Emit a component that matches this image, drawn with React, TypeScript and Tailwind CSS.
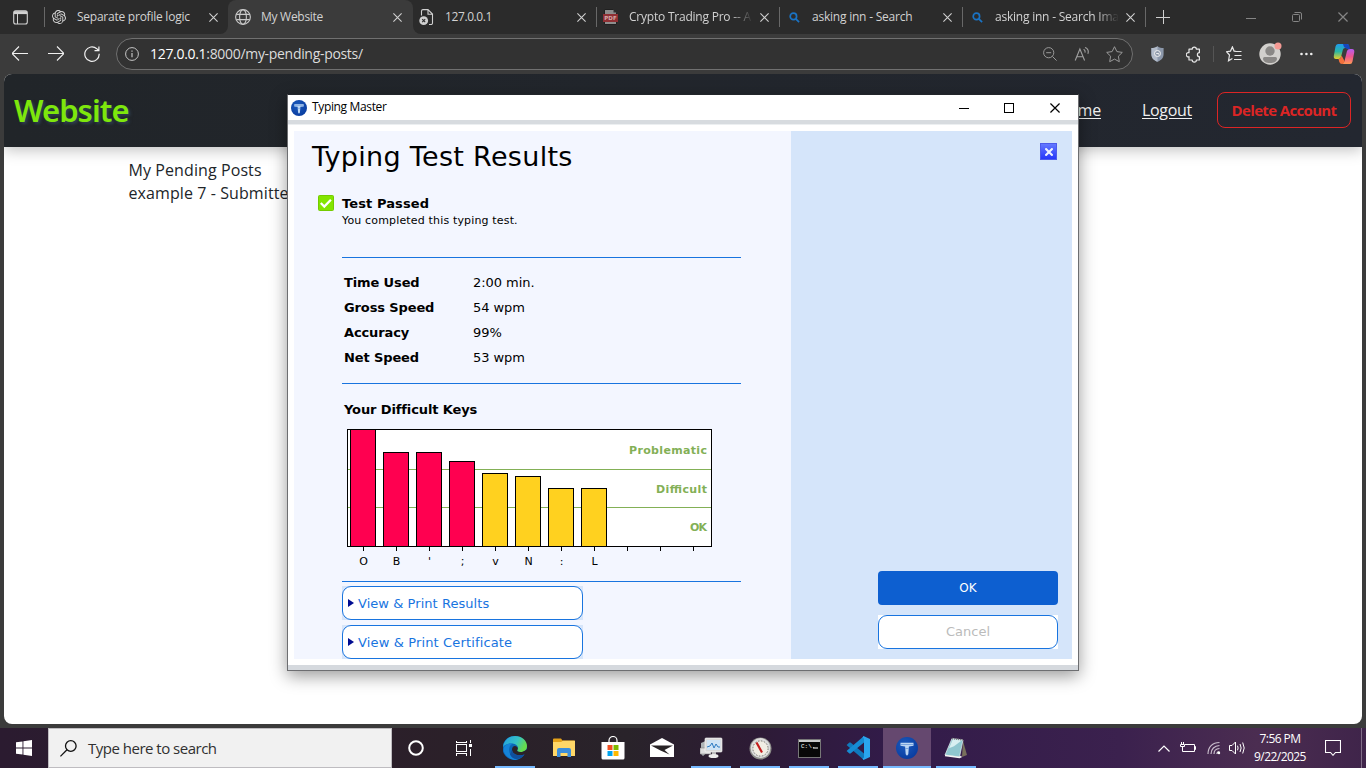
import React from "react";

const X = ({ s = 9, c = "#d0d0d0", w = 1.1 }: { s?: number; c?: string; w?: number }) => (
  <svg width={s} height={s} viewBox="0 0 9 9" fill="none" stroke={c} strokeWidth={w} className="shrink-0">
    <path d="M.4.4 8.6 8.6M8.6.4.4 8.6" />
  </svg>
);

const Globe = () => (
  <svg width="16" height="16" viewBox="0 0 16 16" fill="none" stroke="#c9c9c9" strokeWidth="1.1">
    <circle cx="8" cy="8" r="7.4" />
    <ellipse cx="8" cy="8" rx="3.4" ry="7.3" />
    <path d="M1.3 5.4h13.4M1.3 10.6h13.4" />
  </svg>
);

const Gpt = () => (
  <svg width="14" height="14" viewBox="0 0 24 24" fill="#d6d6d6">
    <path d="M22.28 9.82a5.98 5.98 0 0 0-.52-4.91 6.05 6.05 0 0 0-6.51-2.9A6.07 6.07 0 0 0 4.98 4.18a5.98 5.98 0 0 0-4 2.9 6.05 6.05 0 0 0 .74 7.1 5.98 5.98 0 0 0 .51 4.91 6.05 6.05 0 0 0 6.52 2.9A5.98 5.98 0 0 0 13.26 24a6.06 6.06 0 0 0 5.77-4.21 5.99 5.99 0 0 0 4-2.9 6.06 6.06 0 0 0-.75-7.07zM13.26 22.43a4.48 4.48 0 0 1-2.88-1.04l.14-.08 4.78-2.76a.8.8 0 0 0 .39-.68v-6.74l2.02 1.17v5.58a4.5 4.5 0 0 1-4.45 4.55zM3.6 18.3a4.47 4.47 0 0 1-.54-3.01l.14.08 4.78 2.76a.77.77 0 0 0 .78 0l5.84-3.37v2.33L9.74 19.95A4.5 4.5 0 0 1 3.6 18.3zM2.34 7.9a4.49 4.49 0 0 1 2.37-1.98V11.6a.77.77 0 0 0 .39.68l5.81 3.35-2.02 1.17-4.83-2.79A4.5 4.5 0 0 1 2.34 7.9zm16.6 3.85-5.84-3.38 2.02-1.17 4.83 2.79a4.5 4.5 0 0 1-.68 8.1v-5.67a.79.79 0 0 0-.4-.67zm2.01-3.02-.14-.09-4.77-2.78a.78.78 0 0 0-.79 0L9.41 9.23V6.9l4.85-2.8a4.5 4.5 0 0 1 6.68 4.66zM8.31 12.86l-2.02-1.16V6.07a4.5 4.5 0 0 1 7.38-3.45l-.15.08-4.78 2.76a.8.8 0 0 0-.39.68zm1.09-2.36L12 9l2.61 1.5v3L12 15l-2.6-1.5z" />
  </svg>
);

const ErrPage = () => (
  <svg width="15" height="17" viewBox="0 0 15 17" fill="none" stroke="#d0d0d0">
    <path d="M2.5 6.5V2A1.5 1.5 0 0 1 4 .6h5L13.5 5v9A1.5 1.5 0 0 1 12 15.5h-2M9 .8V5.2h4.4" strokeWidth="1.1" />
    <circle cx="4.7" cy="11.7" r="4.4" fill="#d0d0d0" stroke="none" />
    <path d="M3.2 10.2l3 3M6.2 10.2l-3 3" stroke="#2b2b2b" strokeWidth="1.1" />
  </svg>
);

const Pdf = () => (
  <svg width="15" height="16" viewBox="0 0 15 16">
    <path d="M1.5.5h9l3 3v12h-12z" fill="#8d8d8d" stroke="#202020" />
    <path d="M10.5.5v3h3" fill="#333" />
    <rect x="0" y="5" width="15" height="8" fill="#8f2f33" />
    <text x="7.5" y="11.3" fontSize="5.5" fontWeight="700" fill="#d3a9a9" textAnchor="middle" fontFamily="DejaVu Sans">PDF</text>
  </svg>
);

const BlueSearch = () => (
  <svg width="11" height="11" viewBox="0 0 11 11" fill="none" stroke="#1a73c4" strokeWidth="1.7">
    <circle cx="4.4" cy="4.4" r="3.2" />
    <path d="M6.8 6.8l3.3 3.4" />
  </svg>
);

const TLogo = ({ s }: { s: number }) => (
  <svg width={s} height={s} viewBox="0 0 22 22" className="shrink-0">
    <defs>
      <radialGradient id="tm" cx=".4" cy=".35" r=".8">
        <stop offset="0" stopColor="#1b5bbd" />
        <stop offset="1" stopColor="#06379b" />
      </radialGradient>
    </defs>
    <circle cx="11" cy="11" r="11" fill="url(#tm)" />
    <path d="M4.5 5.8h13v3l-4.6.6-.6 7.900-1.300 1.500-1.300-1.500-.6-7.900-4.600-.6z" fill="#bcd6f3" />
    <path d="M4.500 7.500h13M9.400 11.500h3.200" stroke="#5f8fd3" strokeWidth=".7" />
  </svg>
);

const tabText = "text-[12px] leading-4 whitespace-nowrap overflow-hidden text-[#d2d2d2]";
const fade = " [mask-image:linear-gradient(to_right,black_82%,transparent_100%)]";

function Tabs() {
  return (
    <div className="flex h-[34px] shrink-0 items-center bg-[#2b2b2b]">
      <div className="flex w-11 shrink-0 justify-center pr-1">
        <svg width="15" height="15" viewBox="0 0 15 15" fill="none" stroke="#d2d2d2">
          <rect x=".7" y=".7" width="13.6" height="13.3" rx="2" strokeWidth="1.1" />
          <path d="M1 2.6h13" strokeWidth="3" />
          <path d="M4.5 3v11" />
        </svg>
      </div>
      <div className="h-[34px] w-[184px] shrink-0 bg-[#3b3b3b]">
        <div className="flex h-[34px] items-center rounded-br-lg bg-[#2b2b2b]">
          <div className="h-5 w-px bg-[#686868]" />
          <div className="ml-[7px] flex w-[25px]"><Gpt /></div>
          <div className={tabText + " w-[128px] tracking-[-0.24px]"}>Separate profile logic</div>
          <div className="ml-1"><X /></div>
        </div>
      </div>
      <div className="h-[34px] w-[185px] shrink-0 bg-[#2b2b2b]">
        <div className="flex h-[34px] items-center rounded-t-lg bg-[#3b3b3b] pl-[7px]">
          <div className="w-[26px]"><Globe /></div>
          <div className={tabText + " w-[132px] tracking-[-0.28px]"}>My Website</div>
          <X />
        </div>
      </div>
      <div className="h-[34px] w-[183px] shrink-0 bg-[#3b3b3b]">
        <div className="flex h-[34px] items-center rounded-bl-lg bg-[#2b2b2b] pl-1.5">
          <div className="w-[26px]"><ErrPage /></div>
          <div className={tabText + " w-[132px] tracking-[-0.4px]"}>127.0.0.1</div>
          <X />
        </div>
      </div>
      <div className="flex w-[183px] shrink-0 items-center">
        <div className="h-5 w-px bg-[#686868]" />
        <div className="w-[32px] pl-[6px]"><Pdf /></div>
        <div className={tabText + " w-[124px] tracking-[-0.22px]" + fade}>Crypto Trading Pro -- A</div>
        <div className="ml-[7px]"><X /></div>
      </div>
      {["asking inn - Search", "asking inn - Search Ima"].map((t, i) => (
        <div key={t} className="flex w-[183px] shrink-0 items-center">
          <div className="h-5 w-px bg-[#686868]" />
          <div className="w-[32px] pl-[9px]"><BlueSearch /></div>
          <div className={tabText + " w-[124px] tracking-[-0.22px]" + (i ? fade : "")}>{t}</div>
          <div className="ml-[7px]"><X /></div>
        </div>
      ))}
      <div className="h-5 w-px bg-[#686868]" />
      <svg className="ml-2.5" width="14" height="14" viewBox="0 0 14 14" stroke="#d0d0d0"><path d="M7.5 0v14M0 7.5h14" /></svg>
      <div className="ml-auto flex items-center gap-9 pr-[18px]">
        <svg width="10" height="10" stroke="#858585"><path d="M0 6.5h10" /></svg>
        <svg width="10" height="10" viewBox="0 0 10 10" fill="none" stroke="#858585">
          <rect x=".5" y="2.5" width="7" height="7" rx="1" />
          <path d="M2.5.5H8A1.5 1.5 0 0 1 9.5 2v5.5" />
        </svg>
        <X c="#858585" s={10} />
      </div>
    </div>
  );
}

function AddressBar() {
  return (
    <div className="flex h-10 shrink-0 items-center bg-[#3b3b3b] pl-3">
      <svg width="16" height="16" viewBox="0 0 16 16" fill="none" stroke="#f0f0f0" strokeWidth="1.1"><path d="M0 7.500h16M7 .5 0 7.500l7 7" /></svg>
      <svg className="ml-5" width="16" height="16" viewBox="0 0 16 16" fill="none" stroke="#f0f0f0" strokeWidth="1.1"><path d="M0 7.500h16M9 .5l7 7-7 7" /></svg>
      <svg className="ml-5" width="16" height="16" viewBox="0 0 16 16" fill="none" stroke="#f0f0f0" strokeWidth="1.2"><path d="M15.2 7.8A7.2 7.2 0 1 1 12.8 2.7l1.7 1.7M14.9.5v4.2h-4.4" /></svg>
      <div className="ml-4 flex h-8 w-[1017px] items-center rounded-full border border-[#707070] bg-[#323232] pr-[9px] pl-2">
        <svg width="14" height="14" viewBox="0 0 14 14" fill="none" stroke="#c5c5c5"><circle cx="7" cy="7" r="6.4" /><path d="M7 6v4.2M7 3.6v1.2" strokeWidth="1.2" /></svg>
        <div className="ml-[11px] pb-px text-[14px] leading-5 tracking-[-0.31px] text-[#dcdcdc]"><span className="text-white">127.0.0.1</span>:8000/my-pending-posts/</div>
        <div className="ml-auto flex items-center gap-[17px]">
          <svg width="14" height="14" viewBox="0 0 14 14" fill="none" stroke="#999"><circle cx="5.7" cy="5.7" r="5.1" /><path d="M9.4 9.4l4.2 4.2M3.2 5.7h5" /></svg>
          <svg width="15" height="15" viewBox="0 0 15 15" fill="none" stroke="#a0a0a0" strokeWidth="1.1"><path d="M1.200 13.500 5.900 2l4.700 11.500M2.700 9.700h6.400M9.500 2.500c1.500.4 1.800 2 1.400 3.200M11 .5c3 .8 3.900 3.800 2.800 6.300" /></svg>
          <svg width="17" height="17" viewBox="0 0 17 17" fill="none" stroke="#999" strokeLinejoin="round"><path d="m8.5.7 2.400 4.900 5.400.8-3.900 3.800.9 5.500-4.800-2.600-4.800 2.600.9-5.500L.7 6.400l5.400-.8z" /></svg>
        </div>
      </div>
      <svg className="ml-[18px]" width="13" height="16" viewBox="0 0 13 16"><path d="M6.5.2C8.5 1.7 10.5 2 12.6 2v6c0 4-2.6 6.5-6.1 7.8C3 14.5.4 12 .4 8V2c2.1 0 4.1-.3 6.1-1.8z" fill="#8c98ab" /><path d="M6.5.2v15.6C3 14.5.4 12 .4 8V2c2.1 0 4.1-.3 6.1-1.8z" fill="#b3bcca" /><circle cx="6.5" cy="7.5" r="3" fill="#929dad" stroke="#f0f0f0" /><path d="M5.2 7.5h2.6v1.2" fill="none" stroke="#eee" /></svg>
      <svg className="ml-[22px]" width="16" height="17" viewBox="0 0 16 17" fill="none" stroke="#e7e7e7" strokeWidth="1.2" strokeLinejoin="round"><path d="M3 3.200h3.200a2.100 2.100 0 1 1 4.200 0h3v3.500a2 2 0 0 0 0 4V14h-3a2.100 2.100 0 0 1-4.200 0H3v-3.300a2.100 2.100 0 1 1 0-4z" /></svg>
      <div className="ml-[11px] h-4 w-px bg-[#555]" />
      <svg className="ml-3" width="16" height="16" viewBox="0 0 16 16" fill="none" stroke="#e7e7e7" strokeWidth="1.2"><path d="M10 5.4 8.1 5.1 6.4.9 4.5 5.1.5 5.7 3.5 9 2.5 14.8l3.9-2.2M9 5.5h6.5M8.5 9.5H15.5M8 13.5h7.5" /></svg>
      <svg className="ml-[17px]" width="24" height="24" viewBox="0 0 24 24"><circle cx="11" cy="12" r="10.700" fill="#d2d0cd" /><circle cx="11" cy="9" r="4.700" fill="#8a8886" /><path d="M4 16.500q0-1.500 1.500-1.500h11q1.500 0 1.500 1.500c0 3-3 4.600-7 4.600s-7-1.600-7-4.600z" fill="#8a8886" /><circle cx="19" cy="3.900" r="3.500" fill="#f49a94" /></svg>
      <svg className="ml-[17px]" width="13" height="4" fill="#eee"><circle cx="1.5" cy="2" r="1.3" /><circle cx="6.4" cy="2" r="1.3" /><circle cx="11.3" cy="2" r="1.3" /></svg>
      <svg className="ml-[20px] shrink-0" width="22" height="22" viewBox="0 0 22 22">
        <defs>
          <linearGradient id="cpa" x1="0" y1="0" x2="0" y2="1"><stop offset="0" stopColor="#209bf0" /><stop offset=".5" stopColor="#29b6a4" /><stop offset="1" stopColor="#e7cf2a" /></linearGradient>
          <linearGradient id="cpb" x1="0" y1="0" x2="0" y2="1"><stop offset="0" stopColor="#b55cf0" /><stop offset=".5" stopColor="#ee5590" /><stop offset="1" stopColor="#ff9a54" /></linearGradient>
        </defs>
        <path d="M5 1h9q2 0 1.5 2l-.5 2h-3q-1.700 0-2.200 2L8 14q-.5 2-2.500 2H3q-2.500 0-2.200-3L2.500 3.500Q3 1 5 1z" fill="url(#cpa)" />
        <path d="M10 1h4q2 0 2.300 1.500L17 6h-3l-3-2z" fill="#1746bd" />
        <path d="M17 6h2q2.500 0 2.300 3l-1.800 9.500q-.5 2.500-2.500 2.500H9q2-1 2.500-3L14 8q.6-2 3-2z" fill="url(#cpb)" />
        <path d="M5.500 16q2 0 2.500-2l.6-1.500 2.900 5.500Q11 21 9 21T6.300 19z" fill="#f3703c" />
      </svg>
    </div>
  );
}

const bars = [
  { k: "O", h: 117, red: true },
  { k: "B", h: 94, red: true },
  { k: "'", h: 94, red: true },
  { k: ";", h: 85, red: true },
  { k: "v", h: 73, red: false },
  { k: "N", h: 70, red: false },
  { k: ":", h: 58, red: false },
  { k: "L", h: 58, red: false },
];

function KeyChart() {
  return (
    <svg className="ml-[53px] block" width="366" height="146" viewBox="0 0 366 146" fontFamily="'DejaVu Sans'" fontSize="11" shapeRendering="crispEdges">
      <rect x=".5" y=".5" width="364" height="117" fill="#fff" stroke="#000" />
      <path d="M1 40.5h363M1 78.5h363" stroke="#83b056" />
      {bars.map((b, i) => (
        <g key={b.k}>
          <rect x={3.5 + i * 33} y={117.5 - b.h} width="25" height={b.h} fill={b.red ? "#ff0050" : "#ffd11f"} stroke="#000" />
          <text x={16.5 + i * 33} y="136" textAnchor="middle">{b.k}</text>
        </g>
      ))}
      {Array.from({ length: 11 }, (_, i) => (
        <path key={i} d={`M${16.5 + i * 33} 118v4`} stroke="#000" />
      ))}
      <g fill="#83b056" fontWeight="700" textAnchor="end" fontSize="11">
        <text x="360" y="25" textLength="78">Problematic</text>
        <text x="360" y="64" textLength="51">Difficult</text>
        <text x="360" y="102" textLength="17">OK</text>
      </g>
    </svg>
  );
}

const stats = [
  ["Time Used", "2:00 min."],
  ["Gross Speed", "54 wpm"],
  ["Accuracy", "99%"],
  ["Net Speed", "53 wpm"],
];

const links = [
  { t: "View & Print Results", c: "tracking-[0.05px]" },
  { t: "View & Print Certificate", c: "tracking-[0.14px]" },
];

function Dialog() {
  return (
    <div className="absolute top-[94px] left-[287px] flex h-[577px] w-[792px] flex-col border border-[#6d6e71] border-t-[#22252a] bg-white font-['DejaVu_Sans',sans-serif] text-black shadow-[0_5px_16px_rgba(0,0,0,0.4)]">
      <div className="flex h-[25px] shrink-0 items-center bg-white pl-[3px]">
        <TLogo s={16} />
        <span className="ml-[5px] pb-px font-['Open_Sans',sans-serif] text-[12px] tracking-[-0.35px]">Typing Master</span>
        <div className="ml-auto flex items-center gap-[35px] pr-[18px]">
          <svg className="-mr-px" width="11" height="10" stroke="#000"><path d="M0 5.500h10" /></svg>
          <svg className="mr-px" width="10" height="10" fill="none" stroke="#000"><rect x=".5" y=".5" width="9" height="9" /></svg>
          <X s={10} c="#000" />
        </div>
      </div>
      <div className="h-[5px] shrink-0 border-b border-[#eceff1] bg-[#d7dbdf]" />
      <div className="flex min-h-0 flex-1 px-1.5 pt-1.5 pb-[6px]">
        <div className="flex w-[497px] flex-col bg-[#f3f6ff]">
          <h1 className="mt-[9px] ml-[18px] h-[34px] text-[27px] leading-[34px] whitespace-nowrap tracking-[0.3px]">Typing Test Results</h1>
          <div className="mt-[20px] ml-6 flex">
            <svg width="16" height="16" viewBox="0 0 16 16" className="mt-[1px]"><rect x=".5" y=".5" width="15" height="15" rx="1" fill="#83e500" stroke="#74cb00" /><path d="m2.800 8 3.500 3.500 6.600-6.800" fill="none" stroke="#fff" strokeWidth="2.3" /></svg>
            <div className="ml-2 pt-px">
              <div className="text-[13px] leading-[17px] font-bold tracking-[0.1px]">Test Passed</div>
              <div className="pt-px text-[11px] leading-[16px] tracking-[0.16px]">You completed this typing test.</div>
            </div>
          </div>
          <div className="mt-[28px] ml-12 h-px w-[399px] shrink-0 bg-[#1874df]" />
          <dl className="mt-[12px] ml-[50px]">
            {stats.map(([a, b]) => (
              <div key={a} className="flex h-[25px] items-center text-[13px]">
                <dt className="w-[129px] font-bold tracking-[-0.12px]">{a}</dt>
                <dd className="tracking-[-0.05px]">{b}</dd>
              </div>
            ))}
          </dl>
          <div className="mt-[13px] ml-12 h-px w-[399px] shrink-0 bg-[#1874df]" />
          <div className="mt-[16px] ml-[50px] h-[29px] text-[13px] leading-5 font-bold tracking-[-0.12px]">Your Difficult Keys</div>
          <KeyChart />
          <div className="mt-[6px] ml-12 h-px w-[399px] shrink-0 bg-[#1874df]" />
          <div className="mt-1 ml-12 flex flex-col gap-[5px]">
            {links.map(({ t, c }) => (
              <div key={t} className="w-[241px] bg-[#d6e5fa]">
                <div className="flex h-[34px] items-center rounded-[9px] border border-[#1874df] bg-white pl-[5px] text-[13px] text-[#1874df]">
                  <svg width="6" height="8" className="mr-1"><path d="M0 0l6 4-6 4z" fill="#000c91" /></svg>
                  <span className={"pt-px " + c}>{t}</span>
                </div>
              </div>
            ))}
          </div>
        </div>
        <div className="flex w-[281px] flex-col bg-[#d5e5fa] pr-[14px]">
          <div className="mt-3 mr-px flex h-[17px] w-[17px] items-center justify-center self-end border border-[#4d5bea] bg-[linear-gradient(#6478ff,#2637fa)]"><X s={8} c="#eef2ff" w={2.4} /></div>
          <div className="mt-auto flex h-[34px] w-[180px] items-center justify-center self-end rounded-[4px] bg-[#0d5fd0] text-[12px] text-white">OK</div>
          <div className="mt-2.5 mb-2.5 w-[180px] self-end bg-white">
            <div className="flex h-[34px] items-center justify-center rounded-[9px] border border-[#1874df] bg-white text-[13px] text-[#bbb]">Cancel</div>
          </div>
        </div>
      </div>
      <div className="h-[5px] shrink-0 bg-[#d5d9de]" />
    </div>
  );
}

const Edge = () => (
  <svg width="24" height="24" viewBox="0 0 24 24">
    <defs>
      <linearGradient id="e1" x1="0" y1="0" x2="1" y2=".4"><stop offset="0" stopColor="#239be0" /><stop offset=".6" stopColor="#35c1c7" /><stop offset="1" stopColor="#66dd4c" /></linearGradient>
    </defs>
    <path d="M12 0a12 12 0 0 1 12 12q0 1-1 2-1.500 1.500-4 2l2.500 2.600A12 12 0 1 1 12 0z" fill="#0b67b8" />
    <path d="M0 11C1 4 6 0 12 0c7 0 12 4.600 12 10 0 4-3 6-6.500 6-3 0-4-1.200-3-2.500C16 11 13.500 8 9.500 7.600 5 7 1.500 9 0 11z" fill="url(#e1)" />
    <path d="M9.600 7.700C3 11 6 22 15 23.600 10 25 3 21.500 1 16-1 9 6 6.500 9.600 7.700z" fill="#1583d7" />
    <path d="M14.500 13.500c-1 1.300 0 2.500 3 2.500 2 0 3.800-.6 5-1.800L24 17l-2.500 1.600C16 20.500 9 18.500 9 13.500c0-2 1.200-3.300 3-3.500 2 .3 3.500 2 2.500 3.500z" fill="#2b2328" />
    <path d="M9 13.500c0 5 7 7 12.500 5.100C18 24 10 25 7 18.500z" fill="#104f9c" />
  </svg>
);
const Folder = () => (
  <svg width="22" height="20" viewBox="0 0 22 20"><path d="M0 1.500Q0 .5 1 .5h7l1.500 2H21q1 0 1 1V18H0z" fill="#e5a219" /><path d="M0 4h8l2-1.300h12V18H0z" fill="#ffd767" /><path d="M4 19v-7q0-2 2-2h10q2 0 2 2v7h-3.500v-4h-7v4z" fill="#3b8edb" /></svg>
);
const Store = () => (
  <svg width="24" height="24" viewBox="0 0 24 24"><path d="M8 7V4.500a4 4 0 0 1 8 0V7" fill="none" stroke="#fff" strokeWidth="1.200" /><path d="M.5 6h23v16q0 1.500-1.500 1.500H2Q.5 23.500.5 22z" fill="#fff" /><path fill="#f25022" d="M6.500 9h5v5h-5z" /><path fill="#7fba00" d="M12.500 9h5v5h-5z" /><path fill="#00a4ef" d="M6.500 15h5v5h-5z" /><path fill="#ffb900" d="M12.500 15h5v5h-5z" /></svg>
);
const Mail = () => (
  <svg width="24" height="20" viewBox="0 0 24 20"><path d="M0 6.500 12 0l12 6.500V19H0z" fill="#fff" /><path d="M1 7.500h22l-8.500 4.500 5 4.500-9-4z" fill="#282326" /></svg>
);
const Monitor = () => (
  <svg width="23" height="22" viewBox="0 0 23 22"><path d="M1 6l9-4v11l-7 6-2-2z" fill="#aeb4b7" /><rect x="0" y="11" width="11" height="6" fill="#dedede" stroke="#777" strokeWidth=".5" /><rect x="5" y="1" width="17" height="14" rx="1" fill="#dadada" stroke="#fff" strokeWidth=".6" /><rect x="6.800" y="3" width="13.500" height="10" fill="#cfe4f5" /><path d="M7 10l3-1 2-3 2 5 2-4 2 3h2" fill="none" stroke="#2d7bc2" /><path d="M12 15h4v3h-4z" fill="#bbb" /><ellipse cx="13.500" cy="19" rx="5" ry="2" fill="#ededed" /></svg>
);
const Gauge = () => (
  <svg width="23" height="23" viewBox="0 0 23 23"><circle cx="11.500" cy="11.500" r="11" fill="#8d8d89" /><circle cx="11.500" cy="11" r="9.900" fill="#ddd" /><circle cx="11.500" cy="11.500" r="7.600" fill="#f1eee4" stroke="#77776f" strokeDasharray="1.500 1.500" /><path d="m7.500 5.500 5.500 10" stroke="#c41d1d" strokeWidth="2.200" /></svg>
);
const Term = () => (
  <svg width="23" height="19" viewBox="0 0 23 19"><rect x=".5" y=".5" width="22" height="18" fill="#080808" stroke="#777" /><path d="M1 2h21" stroke="#ccc" strokeWidth="2" /><text x="3" y="9.300" fontSize="6" fontFamily="Liberation Mono" fill="#fff">C:\.</text><path d="M15 9h5" stroke="#fff" /></svg>
);
const Code = () => (
  <svg width="24" height="24" viewBox="0 0 24 24"><path d="m1.500 8.200 1.800-1.600q.6-.4 1.200 0L18 17.500V24L.8 9.300q-.5-.6.7-1.100z" fill="#0f79bd" /><path d="m1.500 15.800 1.800 1.600q.6.4 1.200 0L18 6.500V0L.8 14.700q-.5.6.7 1.100z" fill="#168bd3" /><path d="M17.500 0 24 3v18l-6.500 3-1-1.500 1.500-1V2.500l-1.500-1z" fill="#2aa5ee" /></svg>
);
const Notepad = () => (
  <svg width="24" height="22" viewBox="0 0 24 22"><path d="M19 4l4 14-5 2z" fill="#78705c" /><path d="M8 1.500 19 3l-3.500 17L1 18z" fill="#8fc6cf" stroke="#e9f3f3" strokeWidth=".7" /><path d="M9 2l9 1.200-8 6-5 2z" fill="#d8eff1" /><path d="M1 18.500 15.500 20.500l2-1" fill="none" stroke="#f5f5f5" strokeWidth="1.400" /><path d="M8 1.500 19 3" stroke="#777" strokeWidth="1.500" strokeDasharray="1 1" /></svg>
);

const apps = [
  { el: <Edge />, on: true },
  { el: <Folder />, on: false },
  { el: <Store />, on: false },
  { el: <Mail />, on: false },
  { el: <Monitor />, on: true },
  { el: <Gauge />, on: true },
  { el: <Term />, on: true },
  { el: <Code />, on: true },
  { el: <TLogo s={22} />, on: true, active: true },
  { el: <Notepad />, on: true },
];

function Taskbar() {
  return (
    <div className="flex h-10 shrink-0 bg-[linear-gradient(90deg,#2b1b30_0%,#2b2029_33%,#29232a_46%,#2d1b35_55%,#321b49_65%,#3b214e_82%,#4b2d51_92%,#3f244a_100%)] text-white">
      <div className="flex w-12 items-center justify-center">
        <svg width="16" height="16" viewBox="0 0 16 16" fill="#fff"><path d="M0 2.300 6.500 1.400V7.500H0zM7.400 1.200 16 0v7.500H7.400zM0 8.400h6.500v6.200L0 13.700zM7.400 8.400H16V16l-8.600-1.200z" /></svg>
      </div>
      <div className="flex w-[344px] items-center border border-[#bebcc0] bg-[#f1f1f1] pl-[11px] text-[#303030]">
        <svg width="17" height="17" viewBox="0 0 17 17" fill="none" stroke="#111" strokeWidth="1.300"><circle cx="10.800" cy="6" r="5.300" /><path d="m7 9.800-6.600 6.600" /></svg>
        <span className="ml-[11px] text-[15px] tracking-[-0.5px]">Type here to search</span>
      </div>
      <div className="flex w-12 items-center justify-center">
        <svg width="16" height="16" viewBox="0 0 16 16" fill="none" stroke="#fff" strokeWidth="2"><circle cx="8" cy="8" r="6.800" /></svg>
      </div>
      <div className="flex w-12 items-center justify-center">
        <svg width="16" height="16" viewBox="0 0 16 16" fill="none" stroke="#fff" shapeRendering="crispEdges"><path d="M.5 4.500h10v7H.5zM.5.500v2h10v-2M.5 15.500v-2h10v2M14.500 0v3M14.500 9v7" /><path d="M13 4h3v3h-3z" fill="#fff" stroke="none" /></svg>
      </div>
      <div className="ml-[3px] flex">
        {apps.map((a, i) => (
          <div key={i} className="w-[49px] pr-px">
            <div className={"flex w-12 flex-col items-center " + (a.active ? "bg-[#65486f]" : "")}>
              <div className="flex h-[38px] items-center pt-[2px]">{a.el}</div>
              <div className={a.active ? "h-0.5 w-12 bg-[#76b9ff]" : a.on ? "h-0.5 w-10 bg-[#76b9ff]" : "h-0.5"} />
            </div>
          </div>
        ))}
      </div>
      <div className="ml-auto flex items-center">
        <svg width="12" height="7" viewBox="0 0 12 7" fill="none" stroke="#fff" strokeWidth="1.200"><path d="m.5 6.500 5.500-5.500 5.500 5.500" /></svg>
        <svg className="ml-[10px]" width="16" height="12" viewBox="0 0 16 12" fill="none" stroke="#fff"><path d="M5 2.500h9.500v7H3.500M14.500 4.500h1v3h-1M1.500 0v2M3.500 0v2M.5 2.500h4v2h-4zM2.500 5v4.500h2" /></svg>
        <svg className="ml-[11px]" width="14" height="14" viewBox="0 0 14 14" fill="none" stroke="#ddd" strokeWidth="1.200"><path d="M1 13C1 6 5.500 1.500 12.500 1.500M4 13c0-5 3.500-8.300 8.500-8.500M7 13c0-3 2.200-5.300 5.500-5.500" stroke="#c9bdcc" /><path d="M10 13c0-1.500 1-2.500 2.500-2.500" /><circle cx="12" cy="12" r="1.200" fill="#fff" stroke="none" /></svg>
        <svg className="ml-[8px]" width="17" height="14" viewBox="0 0 17 14" fill="none" stroke="#fff"><path d="M.5 4.500H3l3.500-3.500v12L3 9.500H.5zM8.500 4.700q1.200 2.300 0 4.600M11 3q2.300 4 0 8M13.700 1.500q3 5.500 0 11" /></svg>
        <div className="ml-[6px] w-[56px] text-center text-[12px] leading-[18px] tracking-[-0.55px] whitespace-nowrap">
          7:56 PM<br />9/22/2025
        </div>
        <svg className="ml-[17px]" width="16" height="16" viewBox="0 0 16 16" fill="none" stroke="#fff" strokeWidth="1.100"><path d="M.5.500h15v12h-5L8 15.300l-2.500-2.800h-5z" /></svg>
        <div className="ml-[20px] h-10 w-px bg-[#806d87]" />
        <div className="w-1" />
      </div>
    </div>
  );
}

export default function App() {
  return (
    <div className="relative flex h-[768px] w-[1366px] flex-col overflow-hidden bg-[#3b3b3b] font-['Open_Sans',sans-serif]">
      <Tabs />
      <AddressBar />
      <main className="mr-1 mb-1 ml-1 flex min-h-0 flex-1 flex-col overflow-hidden rounded-lg bg-white">
        <nav className="flex h-[73px] shrink-0 items-center bg-[linear-gradient(90deg,#212529,#232730)] pr-[11px] pl-[10px] text-[16px] text-[#f0f0f0] shadow-[0_3px_14px_rgba(0,0,0,0.25)]">
          <span className="font-['Noto_Sans',sans-serif] text-[31px] font-semibold tracking-[-0.95px] text-[#7ee70c] [text-shadow:2px_2px_3px_rgba(60,90,120,0.5)]">Website</span>
          <a className="mr-[41px] ml-auto pb-px tracking-[-0.15px] underline underline-offset-2">Home</a>
          <a className="mr-[25px] pb-px tracking-[-0.3px] underline underline-offset-2">Logout</a>
          <span className="mb-px flex h-9 w-[134px] items-center justify-center rounded-lg border border-[#dc2525] text-[15px] font-bold tracking-[-0.65px] whitespace-nowrap text-[#dc2525]">Delete Account</span>
        </nav>
        <div className="pt-[12px] pl-[124.5px] text-[16px] leading-[23px] tracking-[0.09px] text-[#212529]">
          <div>My Pending Posts</div>
          <div>example 7 - Submitted</div>
        </div>
      </main>
      <Taskbar />
      <Dialog />
    </div>
  );
}
